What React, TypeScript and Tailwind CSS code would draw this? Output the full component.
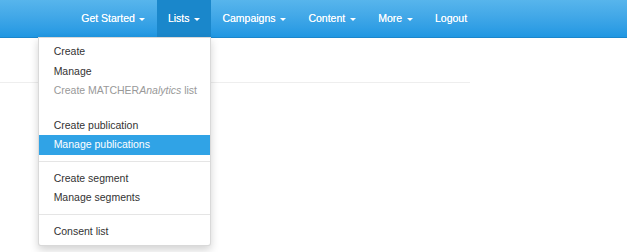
import React from 'react';

const navItems: Array<{ label: string; caret: boolean; active?: boolean }> = [
  { label: 'Get Started', caret: true },
  { label: 'Lists', caret: true, active: true },
  { label: 'Campaigns', caret: true },
  { label: 'Content', caret: true },
  { label: 'More', caret: true },
  { label: 'Logout', caret: false },
];

const Caret = () => (
  <span className="ml-[1.5px] inline-block h-0 w-0 align-middle border-x-[3px] border-t-[3px] border-x-transparent border-t-white" />
);

const Divider = () => <li className="my-[6.5px] h-px bg-[#e5e5e5]" />;

const Item = ({ children, active }: { children: React.ReactNode; active?: boolean }) => (
  <li
    className={
      active
        ? 'block whitespace-nowrap bg-[#30a3e6] px-[15px] leading-[19.5px] text-white'
        : 'block whitespace-nowrap px-[15px] leading-[19.5px] text-[#333]'
    }
  >
    {children}
  </li>
);

export default function App() {
  return (
    <div className="h-[252px] w-[627px] overflow-hidden bg-white font-['Liberation_Sans',Arial,sans-serif] text-[10.5px]">
      {/* Top navbar */}
      <nav className="h-[37.5px] border-b border-[#1b86cb] bg-gradient-to-b from-[#57b5ec] to-[#1f97e2]">
        <ul className="flex pl-[70px]">
          {navItems.map((item) => (
            <li key={item.label} className="relative">
              <span
                className={
                  'block whitespace-pre px-[11.25px] py-[11px] leading-[15px] text-white [text-shadow:0_0_0.4px_rgba(255,255,255,0.8)] ' +
                  (item.active ? 'bg-[#1a87cb]' : '')
                }
              >
                {item.label}
                {item.caret && ' '}
                {item.caret && <Caret />}
              </span>
              {item.active && (
                <ul className="absolute top-full left-[-119px] z-10 w-[173px] rounded-b-[3px] border border-[rgba(0,0,0,0.15)] bg-white pt-[4px] pb-[3.5px] shadow-[0_4px_9px_rgba(0,0,0,0.175)]">
                  <Item>Create</Item>
                  <Item>Manage</Item>
                  <li className="block whitespace-nowrap px-[15px] leading-[19.5px] text-[#999]">
                    Create MATCHER<i>Analytics</i> list
                  </li>
                  <li className="h-[15px]" />
                  <Item>Create publication</Item>
                  <Item active>Manage publications</Item>
                  <Divider />
                  <Item>Create segment</Item>
                  <Item>Manage segments</Item>
                  <Divider />
                  <Item>Consent list</Item>
                </ul>
              )}
            </li>
          ))}
        </ul>
      </nav>

      {/* Page header */}
      <div className="h-[45px] w-[470px] border-b border-[#eee]" />
    </div>
  );
}
